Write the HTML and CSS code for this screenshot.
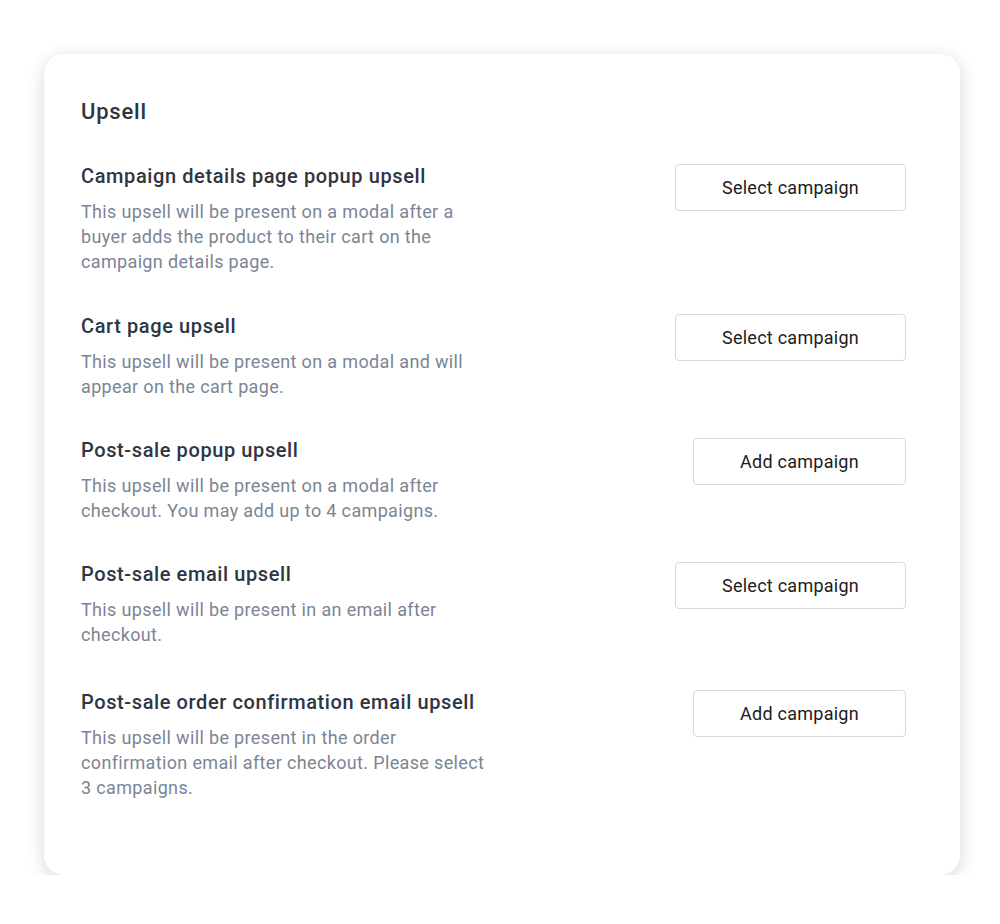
FILE: index.html
```html
<!DOCTYPE html>
<html>
<head>
<meta charset="utf-8">
<link rel="stylesheet" href="styles.css">
</head>
<body>
<div class="card">
  <h1 class="title">Upsell</h1>
  <div class="rows">
    <div class="row row-first">
      <div class="info">
        <h2 class="heading">Campaign details page popup upsell</h2>
        <p class="desc">This upsell will be present on a modal after a buyer adds the product to their cart on the campaign details page.</p>
      </div>
      <button class="btn">Select campaign</button>
    </div>
    <div class="row">
      <div class="info">
        <h2 class="heading">Cart page upsell</h2>
        <p class="desc">This upsell will be present on a modal and will appear on the cart page.</p>
      </div>
      <button class="btn">Select campaign</button>
    </div>
    <div class="row">
      <div class="info">
        <h2 class="heading">Post-sale popup upsell</h2>
        <p class="desc">This upsell will be present on a modal after checkout. You may add up to 4 campaigns.</p>
      </div>
      <button class="btn btn-add">Add campaign</button>
    </div>
    <div class="row">
      <div class="info">
        <h2 class="heading">Post-sale email upsell</h2>
        <p class="desc">This upsell will be present in an email after checkout.</p>
      </div>
      <button class="btn">Select campaign</button>
    </div>
    <div class="row row-last">
      <div class="info">
        <h2 class="heading">Post-sale order confirmation email upsell</h2>
        <p class="desc">This upsell will be present in the order confirmation email after checkout. Please select 3 campaigns.</p>
      </div>
      <button class="btn btn-add">Add campaign</button>
    </div>
  </div>
</div>
</body>
</html>
```
FILE: styles.css
```css
* { box-sizing: border-box; }
html, body { margin: 0; padding: 0; background: #ffffff; }
body {
  font-family: Roboto, "Liberation Sans", sans-serif;
  padding: 54px 40px 0 44px;
}
.card {
  width: 916px;
  height: 821px;
  background: #fff;
  border-radius: 20px;
  box-shadow: 0 4px 18px rgba(0, 0, 0, 0.16);
  padding: 44px 54px 0 37px;
}
.title {
  margin: 0 0 38px;
  font-size: 22px;
  line-height: 28px;
  font-weight: 500;
  letter-spacing: 0.8px;
  color: #2f3541;
}
.rows {
  display: flex;
  flex-direction: column;
  gap: 39px;
}
.row-first { margin-bottom: 1px; }
.row-last { margin-top: 4px; }
.row {
  display: flex;
  justify-content: space-between;
  align-items: flex-start;
}
.info { width: 410px; }
.heading {
  margin: 0;
  font-size: 20px;
  line-height: 24px;
  font-weight: 500;
  letter-spacing: 0.6px;
  color: #2f3541;
}
.desc {
  margin: 11px 0 0;
  font-size: 18px;
  line-height: 25px;
  letter-spacing: 0.35px;
  color: #7b8595;
}
.btn {
  width: 231px;
  height: 47px;
  background: #fff;
  border: 1.5px solid #d6d8dd;
  border-radius: 4px;
  font-family: Roboto, "Liberation Sans", sans-serif;
  font-size: 18px;
  letter-spacing: 0.25px;
  color: #1c1c1c;
  padding: 0;
}
.btn-add { width: 213px; }
```
